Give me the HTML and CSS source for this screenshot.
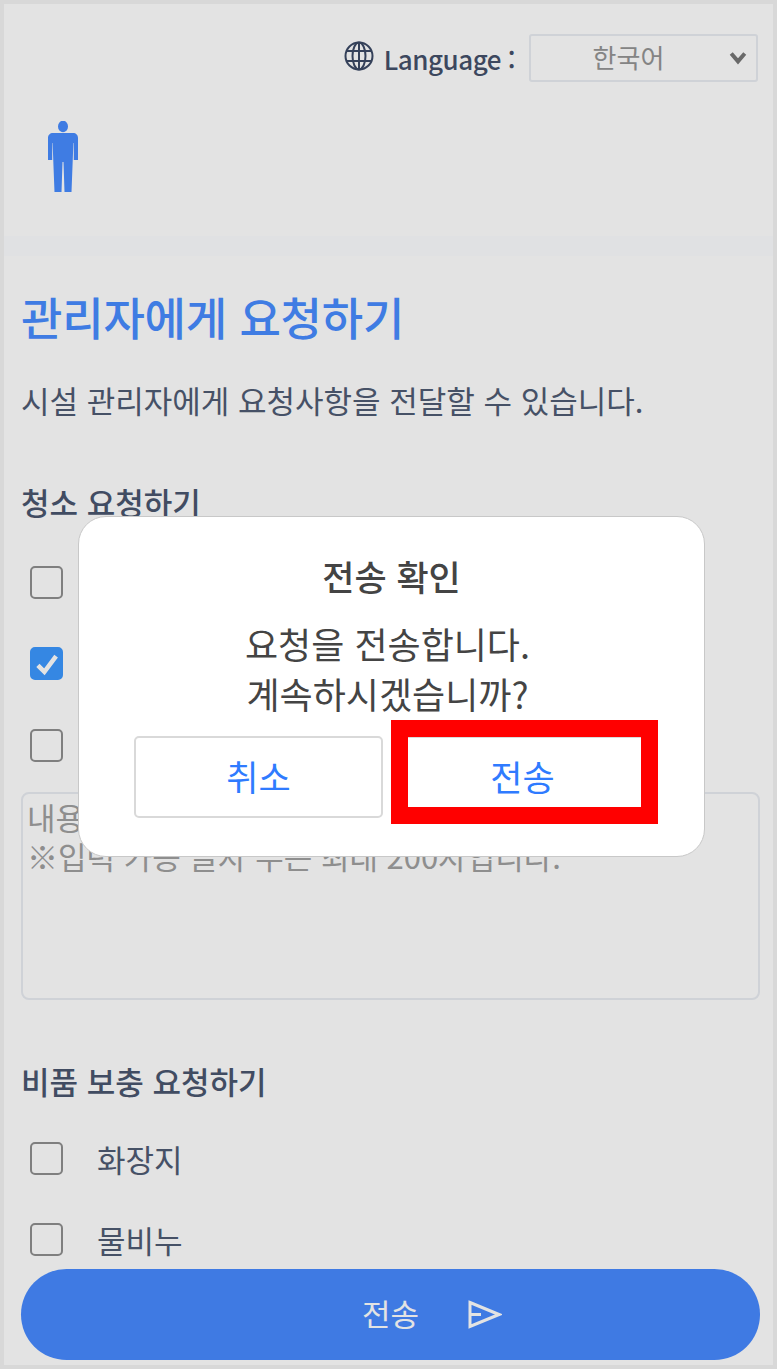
FILE: index.html
```html
<!DOCTYPE html>
<html lang="ko">
<head>
  <meta charset="UTF-8">
  <title>관리자에게 요청하기</title>
  <meta name="viewport" content="width=device-width, initial-scale=1.0"/>
  <link rel="stylesheet" href="styles.css">
</head>
<body>
  <div class="frame">
    <div class="page">
      <header class="top">
        <div class="lang-row">
          <svg class="globe" viewBox="0 0 30 30" fill="none" stroke="#3c4a66" stroke-width="2">
            <circle cx="15" cy="15" r="13.5"/>
            <ellipse cx="15" cy="15" rx="6.5" ry="13.5"/>
            <path d="M15 1.5v27M2.5 10h25M2.5 20h25"/>
          </svg>
          <label class="lang-label" for="lang">Language :</label>
          <select class="lang-select" id="lang">
            <option>한국어</option>
          </select>
        </div>
        <svg class="person" viewBox="0 0 30 71" fill="#478cff">
          <ellipse cx="15" cy="5.5" rx="5" ry="5.8"/>
          <path d="M5 12h20c3 0 5 2 5 5v22h-4.2V22h-.4L23.5 71h-7l-1-30h-1l-1 30h-7L4.6 22h-.4v17H0V17c0-3 2-5 5-5z"/>
        </svg>
      </header>
      <div class="band"></div>

      <main class="content">
        <h1>관리자에게 요청하기</h1>
        <p class="desc">시설 관리자에게 요청사항을 전달할 수 있습니다.</p>

        <h2>청소 요청하기</h2>
        <label class="check"><input type="checkbox"><span>객실 청소</span></label>
        <label class="check"><input type="checkbox" checked><span>침구 교체</span></label>
        <label class="check"><input type="checkbox"><span>기타</span></label>
        <textarea class="memo" placeholder="내용을 입력해 주세요.&#10;※입력 가능 글자 수는 최대 200자입니다."></textarea>

        <h2 class="second">비품 보충 요청하기</h2>
        <label class="check"><input type="checkbox"><span>화장지</span></label>
        <label class="check"><input type="checkbox"><span>물비누</span></label>
      </main>

      <button class="submit">
        <span>전송</span>
        <svg class="send" viewBox="0 0 34 29" fill="none" stroke="#fff" stroke-width="3">
          <path d="M2 2.5l29 12-29 12zM2 14.5h11"/>
        </svg>
      </button>

      <!-- Confirm dialog -->
      <div class="overlay">
        <div class="modal">
          <div class="modal-title">전송 확인</div>
          <div class="modal-msg">요청을 전송합니다.<br>계속하시겠습니까?</div>
          <div class="modal-btns">
            <button class="modal-btn">취소</button>
            <button class="modal-btn ok">전송<span class="highlight"></span></button>
          </div>
        </div>
      </div>
    </div>
  </div>
</body>
</html>
```

FILE: styles.css
```css
* {
  box-sizing: border-box;
}

html, body {
  margin: 0;
  height: 100%;
  overflow: hidden;
}

body {
  font-family: "Noto Sans CJK KR", "Noto Sans", sans-serif;
  color: #4f5b73;
}

.frame {
  height: 100%;
  background: #d8d8d8;
  padding: 4px;
}

.page {
  position: relative;
  height: 100%;
  background: #fff;
  overflow: hidden;
}

.top {
  height: 232px;
  padding: 30px 15px 0 44px;
}

.lang-row {
  display: flex;
  justify-content: flex-end;
  align-items: center;
  height: 48px;
}

.globe {
  width: 30px;
  height: 30px;
  margin: -4px 10px 0 0;
}

.lang-label {
  font-size: 26px;
  font-weight: 500;
  color: #44506a;
  letter-spacing: -0.5px;
  margin-right: 14px;
}

.lang-select {
  appearance: none;
  width: 229px;
  height: 48px;
  padding: 0 30px 3px 0;
  border: 2px solid #e9ecf2;
  border-radius: 3px;
  background: transparent url("data:image/svg+xml,%3Csvg xmlns='http://www.w3.org/2000/svg' viewBox='0 0 16 12'%3E%3Cpath d='M2 2l6 7 6-7' fill='none' stroke='%23777' stroke-width='3.5'/%3E%3C/svg%3E") no-repeat right 9px center / 18px 14px;
  font-family: inherit;
  font-size: 26px;
  color: #959595;
  text-align: center;
}

.person {
  display: block;
  width: 30px;
  height: 71px;
  margin: 39px 0 0 0;
}

.band {
  height: 20px;
  background: #fcfdff;
}

.content {
  padding: 29px 17px 0 17px;
}

h1 {
  margin: 0;
  font-size: 45px;
  line-height: 64px;
  font-weight: 500;
  color: #478cff;
  letter-spacing: -0.2px;
}

.desc {
  margin: 31px 0 0;
  font-size: 31px;
  line-height: 40px;
}

h2 {
  margin: 62px 0 0;
  font-size: 31px;
  line-height: 40px;
  font-weight: 500;
  color: #4a566f;
}

.check {
  display: flex;
  align-items: center;
  height: 34px;
  margin-top: 47.5px;
  padding-left: 9px;
  font-size: 31px;
}

h2 + .check {
  margin-top: 43px;
}

h2.second + .check {
  margin-top: 40px;
}

.check input {
  appearance: none;
  flex: none;
  width: 33px;
  height: 33px;
  margin: 0 34px 0 0;
  border: 2px solid #8f8f8f;
  border-radius: 5px;
  background: #fff;
}

.check input:checked {
  border-color: #3c98ff;
  background: #3c98ff url("data:image/svg+xml,%3Csvg xmlns='http://www.w3.org/2000/svg' viewBox='0 0 20 20'%3E%3Cpath d='M3 11l5 5 9-12' fill='none' stroke='%23fff' stroke-width='3.5'/%3E%3C/svg%3E") no-repeat center / 26px 26px;
}

.memo {
  display: block;
  width: 739px;
  height: 208px;
  margin-top: 30px;
  padding: 3px 4px;
  border: 2px solid #e9ecf2;
  border-radius: 8px;
  background: #fff;
  font-family: inherit;
  font-size: 31px;
  line-height: 39px;
  resize: none;
}

.memo::placeholder {
  color: #a0a0a0;
}

h2.second {
  margin-top: 61px;
}

.submit {
  position: absolute;
  left: 17px;
  bottom: 5px;
  width: 739px;
  height: 91px;
  padding-bottom: 6px;
  display: flex;
  justify-content: center;
  align-items: center;
  border: 0;
  border-radius: 46px;
  background: #478aff;
  color: #fff;
  font-family: inherit;
  font-size: 31px;
}

.send {
  position: absolute;
  left: 447px;
  top: 31px;
  width: 34px;
  height: 29px;
}

.overlay {
  position: absolute;
  inset: 0;
  display: flex;
  justify-content: center;
  align-items: center;
  padding-left: 6px;
  background: rgba(0, 0, 0, 0.11);
}

.modal {
  flex: none;
  width: 627px;
  height: 341px;
  margin-top: 4px;
  padding: 36px 55px 0;
  border: 1px solid #c8c8c8;
  border-radius: 28px;
  background: #fff;
  color: #444;
  text-align: center;
}

.modal-title {
  font-size: 35px;
  line-height: 46px;
  font-weight: 500;
}

.modal-msg {
  margin-top: 19px;
  padding-right: 8px;
  font-size: 36px;
  line-height: 50px;
}

.modal-btns {
  display: flex;
  gap: 15px;
  margin-top: 18px;
}

.modal-btn {
  position: relative;
  width: 249px;
  height: 82px;
  padding-bottom: 4px;
  border: 2px solid #d9d9d9;
  border-radius: 5px;
  background: #fff;
  color: #2f7bff;
  font-family: inherit;
  font-size: 35px;
}

.highlight {
  position: absolute;
  top: -18px;
  bottom: -8px;
  left: -9px;
  right: -13px;
  border: 17px solid #f00;
}
```
